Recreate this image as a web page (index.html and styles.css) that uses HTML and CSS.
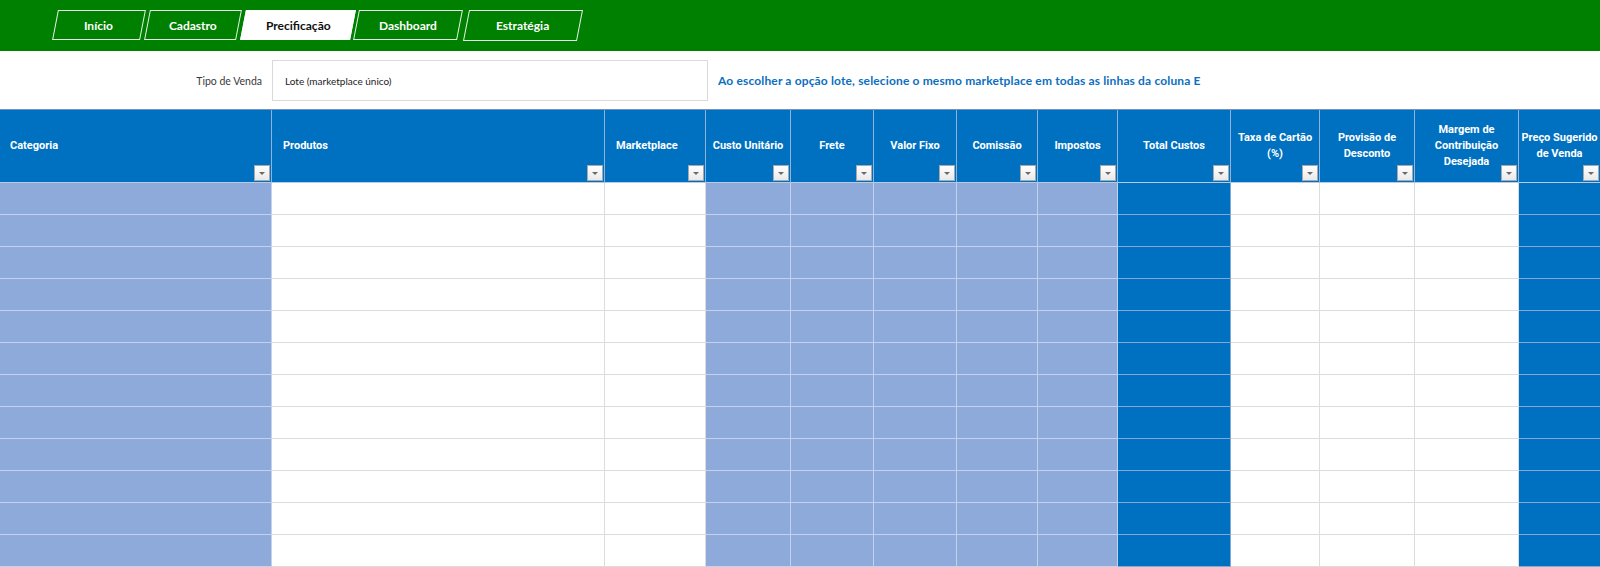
FILE: index.html
```html
<!DOCTYPE html>
<html lang="pt-BR">
<head>
<meta charset="utf-8">
<title>Precificação</title>
<link rel="stylesheet" href="styles.css">
</head>
<body>
<header class="topbar">
  <nav class="tabs">
    <a class="tab tab-inicio"><span>Início</span></a>
    <a class="tab tab-cadastro"><span>Cadastro</span></a>
    <a class="tab tab-prec active"><span>Precificação</span></a>
    <a class="tab tab-dash"><span>Dashboard</span></a>
    <a class="tab tab-estr"><span>Estratégia</span></a>
  </nav>
</header>

<section class="form-row">
  <label class="field-label">Tipo de Venda</label>
  <div class="select-box">Lote (marketplace único)</div>
  <p class="note">Ao escolher a opção lote, selecione o mesmo marketplace em todas as linhas da coluna E</p>
</section>

<section class="sheet">
  <div class="row head">
    <div class="hc left">Categoria<i class="dd"></i></div>
    <div class="hc left">Produtos<i class="dd"></i></div>
    <div class="hc left">Marketplace<i class="dd"></i></div>
    <div class="hc">Custo Unitário<i class="dd"></i></div>
    <div class="hc">Frete<i class="dd"></i></div>
    <div class="hc">Valor Fixo<i class="dd"></i></div>
    <div class="hc">Comissão<i class="dd"></i></div>
    <div class="hc">Impostos<i class="dd"></i></div>
    <div class="hc">Total Custos<i class="dd"></i></div>
    <div class="hc">Taxa de Cartão<br>(%)<i class="dd"></i></div>
    <div class="hc">Provisão de<br>Desconto<i class="dd"></i></div>
    <div class="hc">Margem de<br>Contribuição<br>Desejada<i class="dd"></i></div>
    <div class="hc">Preço Sugerido<br>de Venda<i class="dd"></i></div>
  </div>
  <div class="row body"><span></span><span></span><span></span><span></span><span></span><span></span><span></span><span></span><span></span><span></span><span></span><span></span><span></span></div>
  <div class="row body"><span></span><span></span><span></span><span></span><span></span><span></span><span></span><span></span><span></span><span></span><span></span><span></span><span></span></div>
  <div class="row body"><span></span><span></span><span></span><span></span><span></span><span></span><span></span><span></span><span></span><span></span><span></span><span></span><span></span></div>
  <div class="row body"><span></span><span></span><span></span><span></span><span></span><span></span><span></span><span></span><span></span><span></span><span></span><span></span><span></span></div>
  <div class="row body"><span></span><span></span><span></span><span></span><span></span><span></span><span></span><span></span><span></span><span></span><span></span><span></span><span></span></div>
  <div class="row body"><span></span><span></span><span></span><span></span><span></span><span></span><span></span><span></span><span></span><span></span><span></span><span></span><span></span></div>
  <div class="row body"><span></span><span></span><span></span><span></span><span></span><span></span><span></span><span></span><span></span><span></span><span></span><span></span><span></span></div>
  <div class="row body"><span></span><span></span><span></span><span></span><span></span><span></span><span></span><span></span><span></span><span></span><span></span><span></span><span></span></div>
  <div class="row body"><span></span><span></span><span></span><span></span><span></span><span></span><span></span><span></span><span></span><span></span><span></span><span></span><span></span></div>
  <div class="row body"><span></span><span></span><span></span><span></span><span></span><span></span><span></span><span></span><span></span><span></span><span></span><span></span><span></span></div>
  <div class="row body"><span></span><span></span><span></span><span></span><span></span><span></span><span></span><span></span><span></span><span></span><span></span><span></span><span></span></div>
  <div class="row body"><span></span><span></span><span></span><span></span><span></span><span></span><span></span><span></span><span></span><span></span><span></span><span></span><span></span></div>
</section>
</body>
</html>
```

FILE: styles.css
```css
* { box-sizing: border-box; }

html, body {
  margin: 0;
  padding: 0;
  background: #ffffff;
}

body {
  width: 1600px;
  height: 567px;
  overflow: hidden;
  font-family: Lato, "Open Sans", "Liberation Sans", sans-serif;
}

/* ---------- top bar with tabs ---------- */
.topbar {
  height: 51px;
  background: #008000;
  padding-top: 10px;
}

.tabs {
  display: flex;
  margin-left: 55px;
}

.tab {
  height: 30px;
  border: 1px solid rgba(255, 255, 255, 0.9);
  transform: skewX(-11deg);
  display: flex;
  align-items: center;
  justify-content: center;
  color: #ffffff;
  font-weight: 700;
  font-size: 12px;
}

.tab span {
  transform: skewX(11deg);
  display: block;
}

.tab-inicio { width: 88px; margin-right: 4px; }
.tab-cadastro { width: 92px; margin-right: 4px; }
.tab-prec { width: 110px; margin-right: 3px; }
.tab-dash { width: 104px; margin-right: 6px; }
.tab-estr { width: 114px; height: 31px; }

.tab.active {
  background: #ffffff;
  color: #111111;
}

/* ---------- form row ---------- */
.form-row {
  height: 58px;
  display: flex;
  align-items: center;
  padding-top: 1px;
}

.field-label {
  width: 262px;
  text-align: right;
  font-size: 10.5px;
  color: #3a3a3a;
  margin-right: 10px;
}

.select-box {
  width: 436px;
  height: 41px;
  border: 1px solid #d9d9d9;
  display: flex;
  align-items: center;
  padding-left: 12px;
  font-size: 10px;
  color: #222222;
}

.note {
  margin: 0 0 0 10px;
  color: #0b6fbf;
  font-weight: 700;
  font-size: 12px;
  letter-spacing: 0.15px;
}

/* ---------- sheet ---------- */
.sheet {
  border-top: 1px solid #6f93bf;
}

.row {
  display: grid;
  grid-template-columns: 272px 333px 101px 85px 83px 83px 81px 80px 113px 89px 95px 104px 82px;
  width: 1601px;
}

.row.head {
  height: 73px;
}

.hc {
  position: relative;
  background: #0070c0;
  color: #ffffff;
  font-family: Roboto, "Liberation Sans", sans-serif;
  font-weight: 700;
  font-size: 11px;
  line-height: 16px;
  display: flex;
  align-items: center;
  justify-content: center;
  text-align: center;
  border-right: 1px solid #8fb4dc;
  border-bottom: 1px solid #b7cbe6;
}

.hc.left {
  justify-content: flex-start;
  text-align: left;
  padding-left: 11px;
}

.hc:first-child { padding-left: 10px; }

/* filter dropdown button over the header cell */
.dd {
  position: absolute;
  right: 1px;
  bottom: 1px;
  width: 16px;
  height: 16px;
  background: linear-gradient(#ffffff, #e9e9e9);
  border: 1px solid #a9a9a9;
  display: flex;
  align-items: center;
  justify-content: center;
}

.dd::after {
  content: "";
  width: 0;
  height: 0;
  border-left: 3px solid transparent;
  border-right: 3px solid transparent;
  border-top: 3px solid #6a6a6a;
  margin-top: 1px;
}

.row.body {
  height: 32px;
}

.row.body span {
  background: #ffffff;
  border-right: 1px solid #dcdcdc;
  border-bottom: 1px solid #dcdcdc;
}

.row.body span:nth-child(1),
.row.body span:nth-child(4),
.row.body span:nth-child(5),
.row.body span:nth-child(6),
.row.body span:nth-child(7),
.row.body span:nth-child(8) {
  background: #8eaadb;
  border-color: #c3d1ec;
}

.row.body span:nth-child(9),
.row.body span:nth-child(13) {
  background: #0070c0;
  border-color: #7fa9d6;
}
```
